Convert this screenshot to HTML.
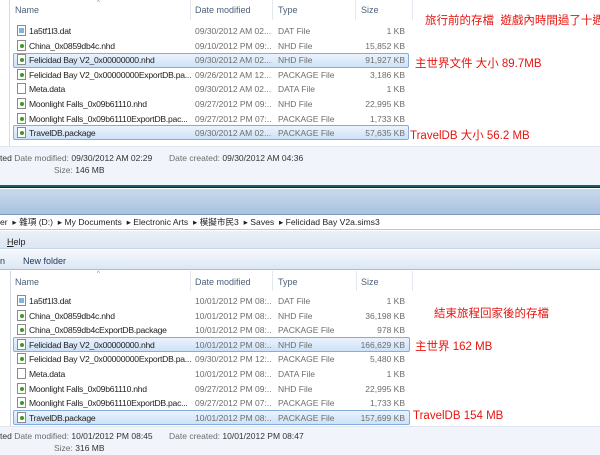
<!DOCTYPE html>
<html><head><meta charset="utf-8"><style>
*{margin:0;padding:0;box-sizing:border-box}
body{width:600px;height:455px;overflow:hidden;background:#fff;font-family:"Liberation Sans","Noto Sans CJK TC",sans-serif;font-size:9px;color:#1e1e1e;position:relative}
.a{position:absolute;white-space:nowrap}
.hd{color:#4c607a}
.d{color:#6d6d6d;font-size:8.5px}
.nm{font-size:8.6px;width:164px;overflow:hidden;letter-spacing:-0.25px}
.sel{position:absolute;border:1px solid #84acdd;border-radius:2px;background:linear-gradient(#eaf3fd,#cfe2f8)}
.ic{position:absolute;width:9px;height:11px;border:1px solid #8a8a8a;background:#fff}
.ic.g::after{content:"";position:absolute;left:2px;top:3px;width:4px;height:4px;border-radius:50%;background:#3c9a20}
.ic.b::after{content:"";position:absolute;left:1px;top:2px;width:5px;height:5px;background:#7fb5dc}
.red{color:#e8140e;font-size:11.5px}
.vl{position:absolute;width:1px;background:#e3e8ef}
</style></head><body>
<div class="a" style="left:0;top:0;width:10px;height:146px;border-right:1px solid #d5dce6;background:#fff"></div>
<div class="vl" style="left:190px;top:0;height:20px"></div>
<div class="vl" style="left:272px;top:0;height:20px"></div>
<div class="vl" style="left:355px;top:0;height:20px"></div>
<div class="vl" style="left:412px;top:0;height:20px"></div>
<div class="a hd" style="left:15px;top:5px">Name</div>
<div class="a hd" style="left:195px;top:5px">Date modified</div>
<div class="a hd" style="left:278px;top:5px">Type</div>
<div class="a hd" style="left:361px;top:5px">Size</div>
<div class="a" style="left:97px;top:0;font-size:6px;color:#7a8aa0">^</div>
<div class="sel" style="left:13px;top:53px;width:396px;height:15px"></div>
<div class="sel" style="left:13px;top:125px;width:396px;height:15px"></div>
<div class="a" style="left:0;top:146px;width:600px;height:1px;background:#dfe6ef"></div>
<div class="a" style="left:0;top:147px;width:600px;height:38px;background:#f1f5fb"></div>
<div class="a d" style="left:0;top:153px"><span style="color:#333">ted</span> Date modified: <span style="color:#333">09/30/2012 AM 02:29</span></div>
<div class="a d" style="left:169px;top:153px">Date created: <span style="color:#333">09/30/2012 AM 04:36</span></div>
<div class="a d" style="left:54px;top:165px">Size: <span style="color:#333">146 MB</span></div>
<div class="a" style="left:0;top:185px;width:600px;height:3px;background:#1f5d67;border-bottom:1px solid #222"></div>
<div class="a" style="left:0;top:189px;width:600px;height:25px;background:linear-gradient(#c9d9ec,#a9c2df)"></div>
<div class="a" style="left:0;top:214px;width:600px;height:16px;background:#fff;border-top:1px solid #7d9bbf;border-bottom:1px solid #b7c8dc"></div>
<div class="a" style="left:0;top:216px;font-size:8.6px">er &nbsp;▸ 雜項 (D:) &nbsp;▸ My Documents &nbsp;▸ Electronic Arts &nbsp;▸ 模擬市民3 &nbsp;▸ Saves &nbsp;▸ Felicidad Bay V2a.sims3</div>
<div class="a" style="left:0;top:231px;width:600px;height:18px;background:linear-gradient(#eaf0f8,#dde6f2);border-bottom:1px solid #c5d3e4"></div>
<div class="a" style="left:7px;top:237px"><u>H</u>elp</div>
<div class="a" style="left:0;top:250px;width:600px;height:20px;background:linear-gradient(#f4f8fc,#dce7f4);border-bottom:1px solid #a8bdd6"></div>
<div class="a" style="left:0;top:256px;color:#1e3457">n</div>
<div class="a" style="left:23px;top:256px;color:#1e3457">New folder</div>
<div class="a" style="left:0;top:271px;width:11px;height:160px;border-right:1px solid #cfd7e2;background:#fff"></div>
<div class="vl" style="left:190px;top:271px;height:20px"></div>
<div class="vl" style="left:272px;top:271px;height:20px"></div>
<div class="vl" style="left:356px;top:271px;height:20px"></div>
<div class="vl" style="left:412px;top:271px;height:20px"></div>
<div class="a hd" style="left:15px;top:277px">Name</div>
<div class="a hd" style="left:195px;top:277px">Date modified</div>
<div class="a hd" style="left:278px;top:277px">Type</div>
<div class="a hd" style="left:361px;top:277px">Size</div>
<div class="a" style="left:97px;top:271px;font-size:6px;color:#7a8aa0">^</div>
<div class="sel" style="left:13px;top:337px;width:397px;height:15px"></div>
<div class="sel" style="left:13px;top:410px;width:397px;height:15px"></div>
<div class="a" style="left:0;top:426px;width:600px;height:29px;background:#f1f5fb;border-top:1px solid #dfe6ef"></div>
<div class="a d" style="left:0;top:431px"><span style="color:#333">ted</span> Date modified: <span style="color:#333">10/01/2012 PM 08:45</span></div>
<div class="a d" style="left:169px;top:431px">Date created: <span style="color:#333">10/01/2012 PM 08:47</span></div>
<div class="a d" style="left:54px;top:443px">Size: <span style="color:#333">316 MB</span></div>
<div id="rows"></div>
<div class="a red" style="left:425px;top:12px">旅行前的存檔 &nbsp;遊戲內時間過了十週</div>
<div class="a red" style="left:415px;top:55px">主世界文件 大小 89.7MB</div>
<div class="a red" style="left:410px;top:127px">TravelDB 大小 56.2 MB</div>
<div class="a red" style="left:434px;top:305px">結束旅程回家後的存檔</div>
<div class="a red" style="left:415px;top:338px">主世界 162 MB</div>
<div class="a red" style="left:413px;top:410px">TravelDB 154 MB</div>
<script>
function rows(top,step,data){var h='';data.forEach(function(r,i){var y=top+i*step;
h+='<div class="ic '+r[0]+'" style="left:17px;top:'+(y-1)+'px"></div>';
h+='<div class="a nm" style="left:29px;top:'+y+'px">'+r[1]+'</div>';
h+='<div class="a d" style="left:195px;top:'+y+'px;width:76px;overflow:hidden">'+r[2]+'</div>';
h+='<div class="a d" style="left:278px;top:'+y+'px">'+r[3]+'</div>';
h+='<div class="a d" style="right:195px;top:'+y+'px">'+r[4]+'</div>';});
document.getElementById('rows').innerHTML+=h;}
rows(26,14.6,[
['b','1a5tf1l3.dat','09/30/2012 AM 02...','DAT File','1 KB'],
['g','China_0x0859db4c.nhd','09/10/2012 PM 09:...','NHD File','15,852 KB'],
['g','Felicidad Bay V2_0x00000000.nhd','09/30/2012 AM 02...','NHD File','91,927 KB'],
['g','Felicidad Bay V2_0x00000000ExportDB.pa...','09/26/2012 AM 12...','PACKAGE File','3,186 KB'],
['','Meta.data','09/30/2012 AM 02...','DATA File','1 KB'],
['g','Moonlight Falls_0x09b61110.nhd','09/27/2012 PM 09:...','NHD File','22,995 KB'],
['g','Moonlight Falls_0x09b61110ExportDB.pac...','09/27/2012 PM 07:...','PACKAGE File','1,733 KB'],
['g','TravelDB.package','09/30/2012 AM 02...','PACKAGE File','57,635 KB']]);
rows(296,14.6,[
['b','1a5tf1l3.dat','10/01/2012 PM 08:...','DAT File','1 KB'],
['g','China_0x0859db4c.nhd','10/01/2012 PM 08:...','NHD File','36,198 KB'],
['g','China_0x0859db4cExportDB.package','10/01/2012 PM 08:...','PACKAGE File','978 KB'],
['g','Felicidad Bay V2_0x00000000.nhd','10/01/2012 PM 08:...','NHD File','166,629 KB'],
['g','Felicidad Bay V2_0x00000000ExportDB.pa...','09/30/2012 PM 12:...','PACKAGE File','5,480 KB'],
['','Meta.data','10/01/2012 PM 08:...','DATA File','1 KB'],
['g','Moonlight Falls_0x09b61110.nhd','09/27/2012 PM 09:...','NHD File','22,995 KB'],
['g','Moonlight Falls_0x09b61110ExportDB.pac...','09/27/2012 PM 07:...','PACKAGE File','1,733 KB'],
['g','TravelDB.package','10/01/2012 PM 08:...','PACKAGE File','157,699 KB']]);
</script>
</body></html>
